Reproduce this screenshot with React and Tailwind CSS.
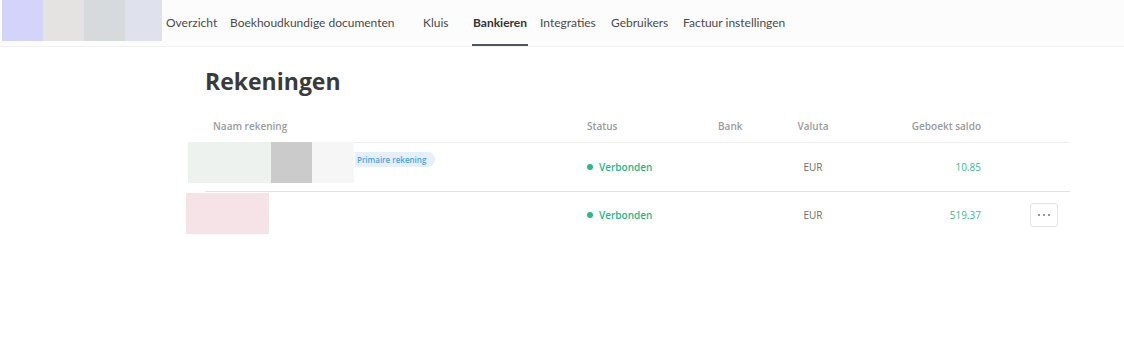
import React from 'react';

const navItems = [
    { label: 'Overzicht', w: 'w-[64px]' },
    { label: 'Boekhoudkundige documenten', w: 'w-[193px]' },
    { label: 'Kluis', w: 'w-[49px]' },
    { label: 'Bankieren', w: 'w-[68px]', active: true },
    { label: 'Integraties', w: 'w-[71px]' },
    { label: 'Gebruikers', w: 'w-[72px]' },
    { label: 'Factuur instellingen', w: 'w-[120px]' },
];

const accounts = [
    {
        id: 1,
        primary: true,
        currency: 'EUR',
        balance: '10.85',
        blocks: ['bg-[#edf2ee] w-[83px]', 'bg-[#cbcbcb] w-[41px]', 'bg-[#f6f6f6] w-[42px]'],
    },
    {
        id: 2,
        primary: false,
        currency: 'EUR',
        balance: '519.37',
        blocks: ['bg-[#f5e3e8] w-[83px]'],
    },
];

const App = () => {
    return (
        <div className="w-[1124px] h-[355px] bg-white font-['Lato',sans-serif] overflow-hidden">
            {/* Top nav */}
            <div className="h-[47px] flex bg-[#fcfcfc] border-b border-[#f0f0f0]">
                <div className="flex pl-[2px] h-[41px]">
                    <div className="w-[41px] bg-[#d4d4fa]" />
                    <div className="w-[41px] bg-[#e4e3e1]" />
                    <div className="w-[41px] bg-[#d6dadb]" />
                    <div className="w-[37px] bg-[#dfe1ec]" />
                </div>
                <nav className="flex items-stretch ml-[4px] text-[12px] text-[#4a4a4a]">
                    {navItems.map(item => (
                        <div key={item.label} className={`${item.w} flex`}>
                            <span
                                className={`flex items-center pt-[2px] border-b-2 whitespace-nowrap ${item.active ? 'border-[#4b5563] font-bold text-[#333] px-[1px]' : 'border-transparent'}`}
                            >
                                {item.label}
                            </span>
                        </div>
                    ))}
                </nav>
            </div>

            <div className="pl-[205px] pt-[19px]">
                <h1 className="text-[23px] font-bold text-[#3a3a3a] leading-[30px] font-['Open_Sans',sans-serif]">Rekeningen</h1>
            </div>

            {/* Table */}
            <div className="ml-[188px] w-[882px] mt-[14px] text-[10px] font-['Open_Sans',sans-serif]">
                <div className="grid grid-cols-[399px_131px_79px_32px_152px_89px] h-[33px] items-center text-[#9a9a9a] font-semibold border-b border-[#eeeeee]">
                    <div className="pl-[25px]">Naam rekening</div>
                    <div>Status</div>
                    <div>Bank</div>
                    <div className="text-center whitespace-nowrap">Valuta</div>
                    <div className="text-right">Geboekt saldo</div>
                    <div />
                </div>
                {accounts.map((acc, i) => (
                    <div key={acc.id} className="relative grid grid-cols-[399px_131px_79px_32px_152px_89px] h-[48px] items-center">
                        {i > 0 && <div className="absolute top-0 left-[17px] right-0 border-t border-[#e2e2e2]" />}
                        <div className="flex h-full items-start">
                            <div className={`flex h-[41px] ${i > 0 ? '-ml-[2px] mt-[2px]' : '-mt-[1px]'}`}>
                                {acc.blocks.map((b, j) => (
                                    <div key={j} className={b} />
                                ))}
                            </div>
                            {acc.primary && (
                                <span className="ml-[1px] mt-[9px] h-[15px] flex items-center pl-[2px] pr-[9px] rounded-r-full bg-[#e6effb] text-[#4aa3e8] text-[8px] font-semibold">
                                    Primaire rekening
                                </span>
                            )}
                        </div>
                        <div className="flex items-center gap-[6px] text-[#29b487] font-semibold">
                            <span className="w-[6px] h-[6px] rounded-full bg-[#2fb68a]" />
                            Verbonden
                        </div>
                        <div />
                        <div className="text-center text-[#6b6b6b]">{acc.currency}</div>
                        <div className="text-right text-[#3dba93]">{acc.balance}</div>
                        <div className="flex justify-end pr-[12px]">
                            {!acc.primary && (
                                <button className="w-[28px] h-[24px] rounded-[3px] border border-[#e3e3e3] bg-white flex items-center justify-center gap-[3px]">
                                    <span className="w-[2px] h-[2px] rounded-full bg-[#777]" />
                                    <span className="w-[2px] h-[2px] rounded-full bg-[#777]" />
                                    <span className="w-[2px] h-[2px] rounded-full bg-[#777]" />
                                </button>
                            )}
                        </div>
                    </div>
                ))}
            </div>
        </div>
    );
};

export default App;
